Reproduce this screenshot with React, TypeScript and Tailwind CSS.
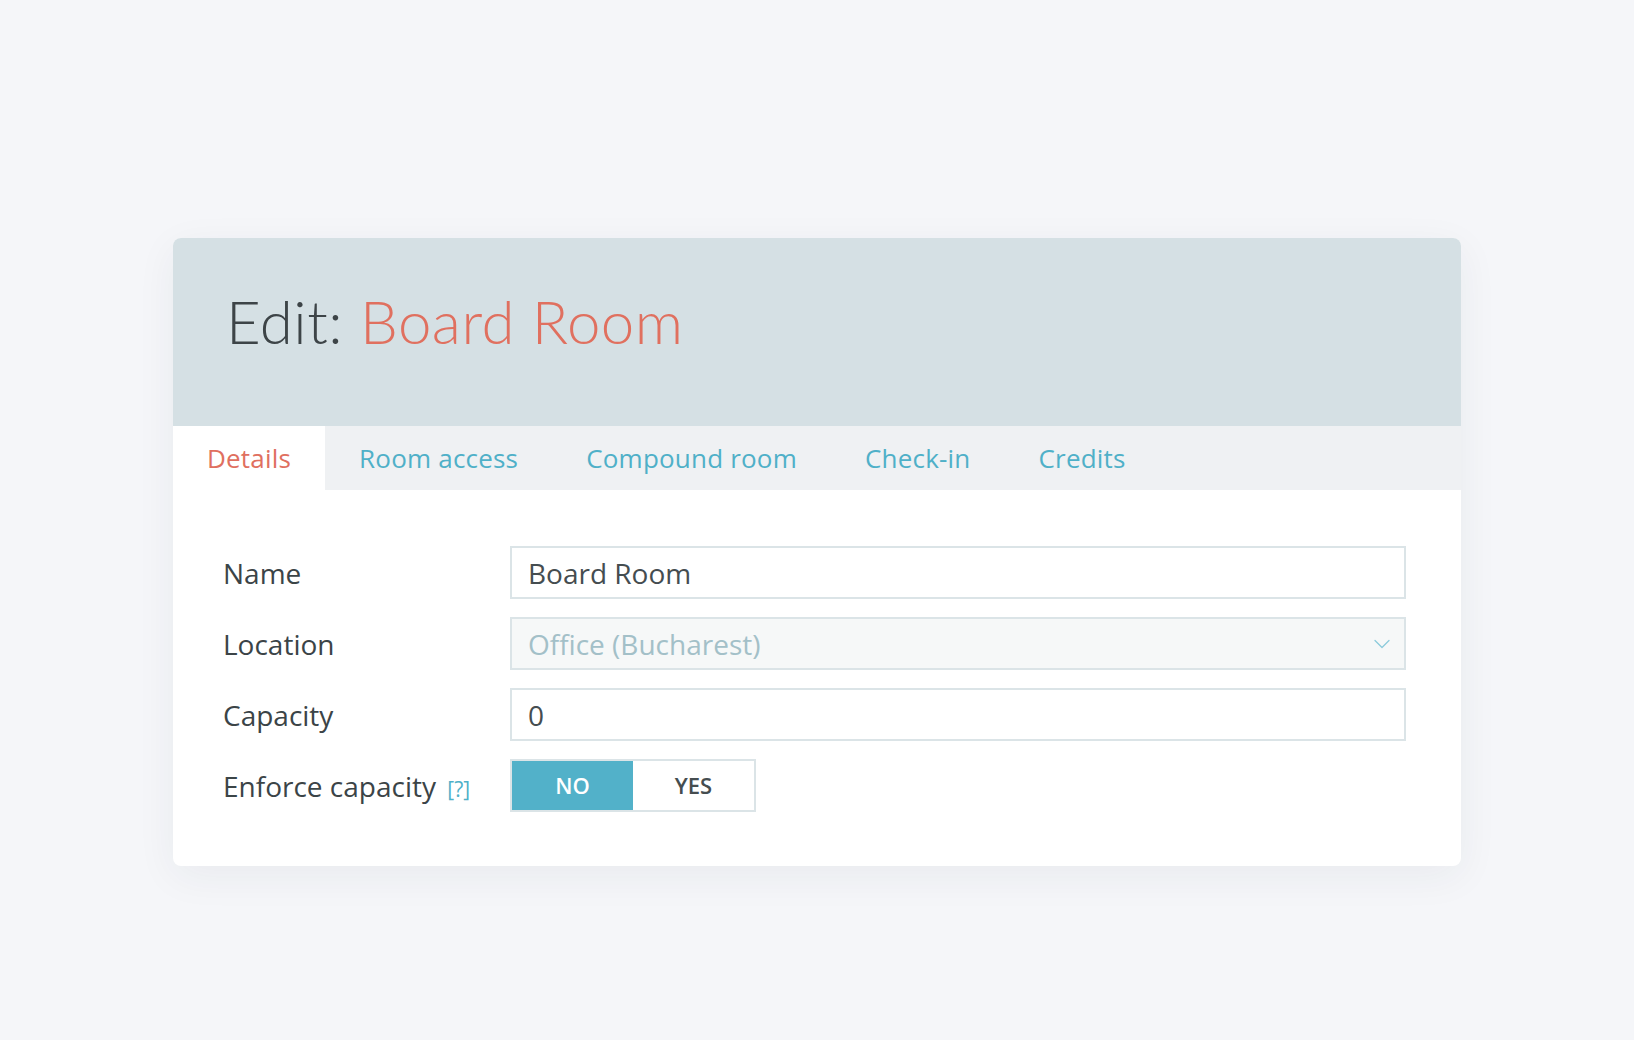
import { ChevronDown } from 'lucide-react';

const tabs = ['Details', 'Room access', 'Compound room', 'Check-in', 'Credits'];

function Label({ children }: { children: React.ReactNode }) {
  return (
    <div className="w-[287px] shrink-0 text-[28px] text-[#3b4447]">{children}</div>
  );
}

export default function App() {
  const active = 'Details';

  return (
    <div
      className="min-h-screen bg-[#f5f6f9] pt-[238px]"
      style={{ fontFamily: '"Open Sans", Lato, sans-serif' }}
    >
      <div className="mx-auto w-[1288px] overflow-hidden rounded-lg bg-white shadow-[0_10px_40px_rgba(30,50,70,0.06)]">
        {/* Header */}
        <div className="flex h-[188px] items-center bg-[#d5e0e4] pb-[22px] pl-[53px]">
          <h1
            className="text-[60px] font-light leading-none tracking-[0.5px] text-[#3d4447]"
            style={{ fontFamily: 'Lato, sans-serif' }}
          >
            Edit: <span className="text-[#e0705f]">Board Room</span>
          </h1>
        </div>

        {/* Tabs */}
        <div className="flex h-[64px] bg-[#eff1f3]">
          {tabs.map((tab) => (
            <div
              key={tab}
              className={`flex h-full items-center px-[34px] text-[26px] tracking-[0.2px] ${
                tab === active ? 'bg-white text-[#e0705f]' : 'text-[#4fb0c8]'
              }`}
            >
              {tab}
            </div>
          ))}
        </div>

        {/* Form */}
        <div className="flex flex-col gap-[18px] pb-[54px] pl-[50px] pr-[55px] pt-[56px]">
          <div className="flex items-center">
            <Label>Name</Label>
            <div className="flex h-[53px] flex-1 items-center border-2 border-[#dbe4e7] px-[16px] text-[28px] text-[#454d50]">
              Board Room
            </div>
          </div>

          <div className="flex items-center">
            <Label>Location</Label>
            <div className="flex h-[53px] flex-1 items-center justify-between border-2 border-[#dbe4e7] bg-[#f6f8f8] pl-[16px] pr-[8px] text-[28px] text-[#a3c0c8]">
              <span>Office (Bucharest)</span>
              <ChevronDown className="h-7 w-7 text-[#8ccbdc]" strokeWidth={1.1} />
            </div>
          </div>

          <div className="flex items-center">
            <Label>Capacity</Label>
            <div className="flex h-[53px] flex-1 items-center border-2 border-[#dbe4e7] px-[16px] text-[28px] text-[#454d50]">
              0
            </div>
          </div>

          <div className="flex items-center">
            <Label>
              Enforce capacity{' '}
              <span className="ml-[4px] text-[21px] text-[#4fb0c8]">[?]</span>
            </Label>
            <div className="flex h-[53px] border-2 border-[#dbe4e7]">
              <div className="flex w-[121px] items-center justify-center bg-[#52b1c9] text-[22px] font-semibold text-white">
                NO
              </div>
              <div className="flex w-[121px] items-center justify-center bg-white text-[22px] font-semibold text-[#454d50]">
                YES
              </div>
            </div>
          </div>
        </div>
      </div>
    </div>
  );
}
